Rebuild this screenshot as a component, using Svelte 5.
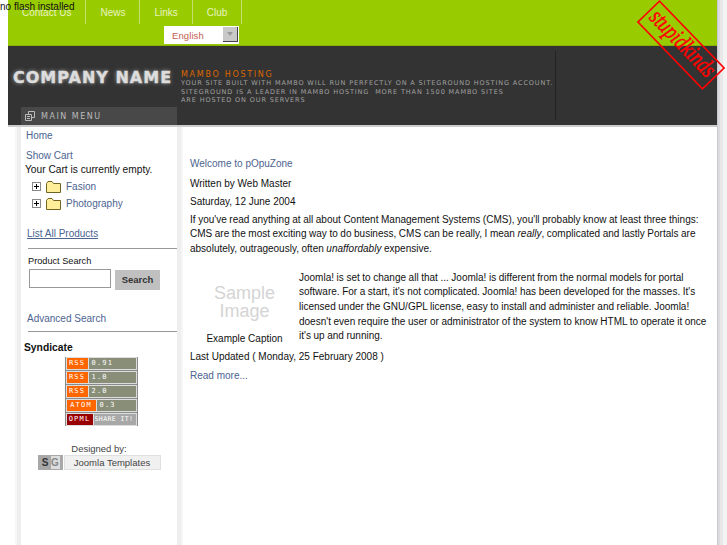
<script>
  const navItems = ['Contact Us', 'News', 'Links', 'Club'];

  const feeds = [
    { label: 'RSS', value: '0.91', width: 21 },
    { label: 'RSS', value: '1.0', width: 21 },
    { label: 'RSS', value: '2.0', width: 21 },
    { label: 'ATOM', value: '0.3', width: 29 },
  ];

  const categories = ['Fasion', 'Photography'];
</script>

<div class="page">
  <div class="flash">no flash installed</div>

  <svg class="stamp" width="96" height="92" viewBox="0 0 96 92">
    <g transform="translate(48 45) rotate(46)">
      <rect x="-46.5" y="-15" width="93" height="30" fill="none" stroke="#ff0000" stroke-width="1.6" />
      <text x="0" y="5" text-anchor="middle" textLength="84" lengthAdjust="spacingAndGlyphs" class="stamp-text">stupidkinds</text>
    </g>
  </svg>

  <header>
    <div class="topbar">
      <nav>
        {#each navItems as item}
          <a class="nav-item" href="#top">{item}</a>
        {/each}
      </nav>
      <div class="lang">
        <span>English</span>
        <i class="lang-btn"></i>
      </div>
    </div>

    <div class="banner">
      <div class="banner-main">
        <div class="logo">COMPANY NAME</div>
        <div class="blurb">
          <h2>MAMBO HOSTING</h2>
          <p>YOUR SITE BUILT WITH MAMBO WILL RUN PERFECTLY ON A SITEGROUND HOSTING ACCOUNT.</p>
          <p>SITEGROUND IS A LEADER IN MAMBO HOSTING&nbsp; MORE THAN 1500 MAMBO SITES</p>
          <p>ARE HOSTED ON OUR SERVERS</p>
        </div>
        <div class="divider"></div>
      </div>
      <div class="menu-title">
        <svg width="10" height="10" viewBox="0 0 10 10">
          <path d="M3.5 3V.5h6v6H7M.5 3.5h6v6h-6zM2 5.5h3M2 7.5h3" fill="none" stroke="#bbb" />
        </svg>
        <span>MAIN MENU</span>
      </div>
    </div>
  </header>

  <div class="content">
    <aside>
      <a class="side-link home" href="#top">Home</a>
      <a class="side-link cart-link" href="#top">Show Cart</a>
      <p class="cart-empty">Your Cart is currently empty.</p>

      <ul class="tree">
        {#each categories as cat}
          <li>
            <span class="plus"></span>
            <svg width="15" height="12" viewBox="0 0 15 12">
              <path d="M.5 2.5 2 .5h4l1.5 2h7v9H.5z" fill="#ffee99" stroke="#6f6424" />
            </svg>
            <a href="#top">{cat}</a>
          </li>
        {/each}
      </ul>

      <a class="all-products" href="#top">List All Products</a>
      <hr />

      <div class="search-label">Product Search</div>
      <div class="search-row">
        <div class="search-input"></div>
        <div class="search-btn">Search</div>
      </div>

      <a class="advanced" href="#top">Advanced Search</a>
      <hr class="second" />

      <h3>Syndicate</h3>
      <div class="badges">
        {#each feeds as feed}
          <div class="badge">
            <span class="badge-label" style="width: {feed.width}px">{feed.label}</span>
            <span class="badge-value">{feed.value}</span>
          </div>
        {/each}
        <div class="badge">
          <span class="badge-label opml">OPML</span>
          <span class="badge-value share">SHARE IT!</span>
        </div>
      </div>

      <div class="designed">Designed by:</div>
      <div class="credits">
        <div class="sg"><b>S</b><b class="g">G</b></div>
        <div class="templates">Joomla Templates</div>
      </div>
    </aside>

    <main>
      <h1>Welcome to pOpuZone</h1>
      <p class="meta">Written by Web Master</p>
      <p class="meta">Saturday, 12 June 2004</p>
      <p class="intro">
        If you've read anything at all about Content Management Systems (CMS), you'll probably know at least three things:
        CMS are the most exciting way to do business, CMS can be really, I mean <em>really</em>, complicated and lastly Portals are
        absolutely, outrageously, often <em>unaffordably</em> expensive.
      </p>

      <div class="article">
        <figure>
          <div class="sample">Sample<br />Image</div>
          <figcaption>Example Caption</figcaption>
        </figure>
        <p>
          Joomla! is set to change all that ... Joomla! is different from the normal models for portal
          software. For a start, it's not complicated. Joomla! has been developed for the masses. It's
          licensed under the GNU/GPL license, easy to install and administer and reliable. Joomla!
          doesn't even require the user or administrator of the system to know HTML to operate it once
          it's up and running.
        </p>
      </div>

      <p class="meta updated">Last Updated ( Monday, 25 February 2008 )</p>
      <a class="more" href="#top">Read more...</a>
    </main>
  </div>
</div>

<style>
  :global(body) {
    background: #ffffff;
    overflow: hidden;
  }

  .page {
    position: relative;
    width: 709px;
    height: 545px;
    margin-left: 8px;
    font-family: 'Liberation Sans', Arial, sans-serif;
    font-size: 10px;
    color: #111111;
    background: #ffffff;
    box-shadow: 1px 0 0 #c8c8d0, 3px 0 0 #dcdce0, 6px 0 0 #e8e8e8, 10px 0 0 #f4f4f4;
  }

  .flash {
    position: absolute;
    left: -8px;
    top: 0;
    font-size: 10px;
    line-height: 14px;
    color: #111111;
    z-index: 2;
  }

  .stamp {
    position: absolute;
    left: 625px;
    top: 0;
    z-index: 2;
  }

  .stamp-text {
    font-family: 'Liberation Serif', serif;
    font-size: 24px;
    font-style: italic;
    fill: #ff0000;
    stroke: #ff0000;
    stroke-width: 0.5px;
  }

  a {
    color: #4d6490;
    text-decoration: none;
  }

  .topbar {
    height: 46px;
    background: #99cc00;
    box-sizing: border-box;
    border-bottom: 1px solid #8ab000;
    display: flex;
    flex-direction: column;
  }

  nav {
    display: flex;
    height: 24px;
  }

  .nav-item {
    color: #e8f3c0;
    line-height: 26px;
    padding: 0 14px;
    border-right: 1px solid #c4e070;
  }

  .lang {
    width: 75px;
    height: 18px;
    margin: 2px 0 0 156px;
    background: #ffffff;
    color: #c2604c;
    box-sizing: border-box;
    padding-left: 8px;
    font-size: 9.5px;
    line-height: 19px;
    letter-spacing: 0.1px;
    display: flex;
    justify-content: space-between;
  }

  .lang-btn {
    width: 15px;
    height: 15px;
    margin: 1px 1px 0 0;
    background: #c8c8c8;
    border-right: 1px solid #444444;
    border-bottom: 1px solid #444444;
    box-sizing: border-box;
    display: flex;
    align-items: center;
    justify-content: center;
  }

  .lang-btn::after {
    content: '';
    border-top: 4px solid #999999;
    border-left: 3px solid transparent;
    border-right: 3px solid transparent;
  }

  .banner {
    height: 79px;
    background: #333333;
    display: flex;
    flex-direction: column;
  }

  .banner-main {
    flex: 1;
    display: flex;
    min-height: 0;
  }

  .logo {
    width: 173px;
    margin-top: 23px;
    padding-left: 5px;
    box-sizing: border-box;
    font-family: 'DejaVu Sans', sans-serif;
    font-size: 16px;
    font-weight: bold;
    letter-spacing: 1px;
    line-height: 18px;
    white-space: nowrap;
    color: #dddddd;
    -webkit-text-stroke: 0.4px #dddddd;
    text-shadow: 0 0 4px rgba(255, 255, 255, 0.6);
  }

  .blurb {
    width: 374px;
    padding-top: 24px;
    font-family: 'DejaVu Sans', sans-serif;
    white-space: nowrap;
  }

  .blurb h2 {
    margin: 0;
    font-size: 8px;
    font-weight: normal;
    line-height: 9px;
    letter-spacing: 1.7px;
    color: #dd6600;
  }

  .blurb p {
    margin: 0;
    font-size: 6.5px;
    line-height: 8.6px;
    letter-spacing: 0.88px;
    color: #a0a0a0;
  }

  .divider {
    width: 1px;
    height: 69px;
    margin-top: 5px;
    background: #222222;
  }

  .menu-title {
    width: 156px;
    height: 18px;
    margin-left: 13px;
    background: #484848;
    display: flex;
    align-items: center;
    gap: 6px;
    padding-left: 4px;
    box-sizing: border-box;
    font-family: 'DejaVu Sans', sans-serif;
    font-size: 8px;
    letter-spacing: 1.5px;
    color: #bbbbbb;
  }

  .content {
    display: flex;
    border-top: 2px solid #cccccc;
  }

  aside {
    width: 156px;
    height: 418px;
    margin-left: 13px;
    box-shadow: -4px 0 0 #eeeeee, -6px 0 0 #f6f6f6, 4px 0 0 #eeeeee, 6px 0 0 #f6f6f6;
    display: flex;
    flex-direction: column;
    padding-left: 5px;
    box-sizing: border-box;
  }

  aside a,
  aside p {
    display: block;
    margin: 0;
  }

  .side-link {
    line-height: 14px;
  }

  .home {
    margin-top: 2px;
  }

  .cart-link {
    margin-top: 6px;
  }

  .cart-empty {
    margin-top: 0;
    margin-left: -1px;
    font-size: 10.2px;
    line-height: 14px;
  }

  .tree {
    list-style: none;
    margin: 1px 0 0 6px;
    padding: 0;
  }

  .tree li {
    display: flex;
    align-items: center;
    height: 17px;
  }

  .tree a {
    margin-left: 5px;
  }

  .plus {
    width: 9px;
    height: 9px;
    margin-right: 5px;
    box-sizing: border-box;
    border: 1px solid #888888;
    background:
      linear-gradient(#000, #000) center / 5px 1px no-repeat,
      linear-gradient(#000, #000) center / 1px 5px no-repeat;
  }

  .all-products {
    margin: 15px 0 0 1px;
    line-height: 14px;
    text-decoration: underline;
  }

  hr {
    width: 149px;
    margin: 7px 0 0 2px;
    border: none;
    border-top: 1px solid #999999;
  }

  .search-label {
    margin: 6px 0 0 2px;
    font-size: 9.2px;
    line-height: 12px;
  }

  .search-row {
    display: flex;
    margin: 2px 0 0 3px;
  }

  .search-input {
    width: 82px;
    height: 19px;
    border: 1px solid #999999;
    box-sizing: border-box;
  }

  .search-btn {
    width: 45px;
    height: 20px;
    margin: 1px 0 0 4px;
    background: #c0c0c0;
    font-size: 9.5px;
    font-weight: bold;
    line-height: 20px;
    text-align: center;
    color: #333333;
  }

  .advanced {
    margin: 22px 0 0 1px;
    line-height: 14px;
  }

  hr.second {
    margin-top: 5px;
  }

  h3 {
    margin: 9px 0 0 -2px;
    font-size: 10.3px;
    line-height: 13px;
    color: #111111;
  }

  .badges {
    align-self: center;
    width: 73px;
    margin: 3px 0 0 -1px;
    background: #8a8a8a;
    box-sizing: border-box;
    display: flex;
    flex-direction: column;
    gap: 1px;
  }

  .badge {
    height: 13px;
    display: flex;
    margin: 0 1px;
    background: #dddddd;
    padding: 1px;
    box-sizing: border-box;
    font-family: 'DejaVu Sans Mono', monospace;
    font-size: 7px;
    line-height: 11px;
    letter-spacing: 1.2px;
    color: #ffffff;
  }

  .badge-label {
    background: #ff6600;
    text-align: center;
    margin-right: 1px;
    flex: none;
  }

  .badge-label.opml {
    width: 26px;
    background: #990000;
  }

  .badge-value {
    flex: 1;
    background: #898e79;
    padding-left: 3px;
    white-space: nowrap;
    overflow: hidden;
  }

  .badge-value.share {
    background: #a8a8a8;
    padding-left: 1px;
    font-size: 6.5px;
    letter-spacing: 0.4px;
  }

  .designed {
    margin: 17px 0 0 -5px;
    text-align: center;
    font-size: 9.5px;
    line-height: 12px;
    color: #444444;
  }

  .credits {
    align-self: center;
    display: flex;
    gap: 1px;
    margin: 0 0 0 -5px;
  }

  .sg {
    display: flex;
    height: 15px;
    padding: 1px 3px;
    gap: 1px;
    background: #a8a8a8;
    box-sizing: border-box;
    font-size: 10px;
    line-height: 13px;
  }

  .sg b {
    color: #333333;
    width: 9px;
    text-align: center;
  }

  .sg .g {
    background: #dddddd;
    color: #888888;
  }

  .templates {
    width: 97px;
    height: 15px;
    background: #f0f0f0;
    border: 1px solid #e0e0e0;
    box-sizing: border-box;
    font-size: 9.5px;
    line-height: 13px;
    text-align: center;
    color: #444444;
  }

  main {
    flex: 1;
    padding: 30px 6px 0 13px;
    min-width: 0;
  }

  main h1 {
    margin: 0 0 4px;
    font-size: 10px;
    font-weight: normal;
    line-height: 14px;
    color: #4d6490;
  }

  main p {
    margin: 0;
  }

  .meta {
    line-height: 18px;
  }

  .intro {
    margin-top: 1.5px;
    line-height: 14.7px;
    word-spacing: -0.2px;
  }

  .article {
    display: flex;
    margin-top: 14px;
  }

  figure {
    width: 109px;
    flex: none;
    margin: 0;
    text-align: center;
  }

  .sample {
    margin-top: 13px;
    font-size: 18px;
    line-height: 18px;
    color: #d4d4d4;
  }

  figcaption {
    margin-top: 12px;
    line-height: 14px;
  }

  .article p {
    flex: 1;
    line-height: 14.7px;
    word-spacing: -0.2px;
  }

  .updated {
    margin-top: 2px;
  }

  .more {
    display: block;
    margin-top: 2px;
    line-height: 16px;
  }
</style>
